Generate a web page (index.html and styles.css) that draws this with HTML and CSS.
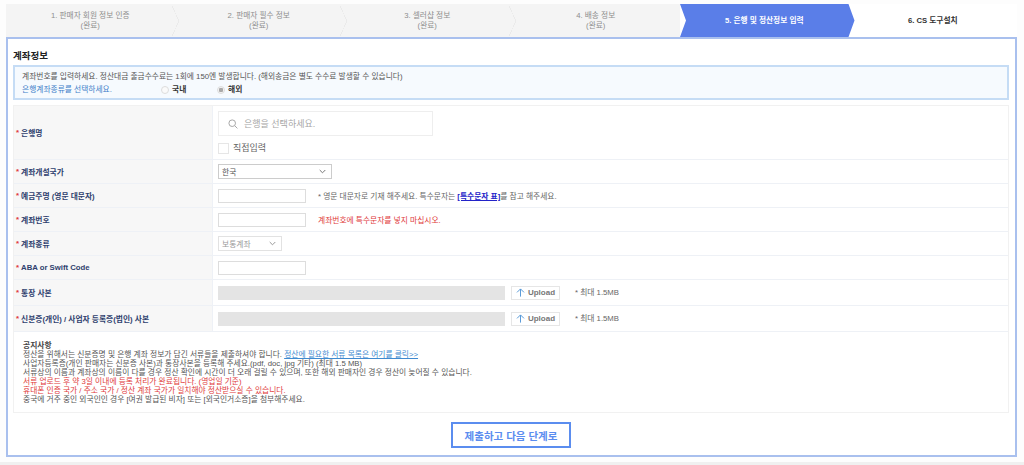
FILE: index.html
```html
<!DOCTYPE html>
<html lang="ko">
<head>
<meta charset="utf-8">
<title>계좌정보</title>
<link rel="stylesheet" href="styles.css">
</head>
<body>
<div class="page">
  <ol class="steps">
    <li class="step done"><span>1. 판매자 회원 정보 인증</span><span>(완료)</span></li>
    <li class="step done"><span>2. 판매자 필수 정보</span><span>(완료)</span></li>
    <li class="step done"><span>3. 셀러샵 정보</span><span>(완료)</span></li>
    <li class="step done last-done"><span>4. 배송 정보</span><span>(완료)</span></li>
    <li class="step active"><span>5. 은행 및 정산정보 입력</span></li>
    <li class="step next"><span>6. CS 도구설치</span></li>
  </ol>
  <main class="panel">
    <h2 class="title">계좌정보</h2>
    <section class="info">
      <p>계좌번호를 입력하세요. 정산대금 출금수수료는 1회에 150엔 발생합니다. (해외송금은 별도 수수료 발생할 수 있습니다)</p>
      <div class="choice">
        <span class="choice-label">은행계좌종류를 선택하세요.</span>
        <span class="radio-wrap first"><i class="radio"></i><b>국내</b></span>
        <span class="radio-wrap"><i class="radio on"></i><b>해외</b></span>
      </div>
    </section>
    <section class="table">
      <div class="row bank">
        <div class="label"><em>*</em><span>은행명</span></div>
        <div class="cell stack">
          <div class="search">
            <svg width="10" height="10" viewBox="0 0 10 10"><circle cx="4.2" cy="4.2" r="3.3" fill="none" stroke="#a8a8a8" stroke-width="1"/><path d="M6.7 6.7 9.4 9.4" stroke="#a8a8a8" stroke-width="1"/></svg>
            <span>은행을 선택하세요.</span>
          </div>
          <div class="check"><i class="box"></i><span>직접입력</span></div>
        </div>
      </div>
      <div class="row r24">
        <div class="label"><em>*</em><span>계좌개설국가</span></div>
        <div class="cell">
          <div class="select wide"><span>한국</span><svg width="7" height="5" viewBox="0 0 7 5"><path d="M.7 1 3.5 3.8 6.3 1" fill="none" stroke="#777" stroke-width="1"/></svg></div>
        </div>
      </div>
      <div class="row r24">
        <div class="label"><em>*</em><span>예금주명 (영문 대문자)</span></div>
        <div class="cell gap12">
          <div class="input"></div>
          <span class="note">* 영문 대문자로 기재 해주세요. 특수문자는 <a class="table-link" href="#">[특수문자 표]</a>를 참고 해주세요.</span>
        </div>
      </div>
      <div class="row r24">
        <div class="label"><em>*</em><span>계좌번호</span></div>
        <div class="cell gap12">
          <div class="input"></div>
          <span class="note red">계좌번호에 특수문자를 넣지 마십시오.</span>
        </div>
      </div>
      <div class="row r24">
        <div class="label"><em>*</em><span>계좌종류</span></div>
        <div class="cell">
          <div class="select narrow"><span>보통계좌</span><svg width="7" height="5" viewBox="0 0 7 5"><path d="M.7 1 3.5 3.8 6.3 1" fill="none" stroke="#999" stroke-width="1"/></svg></div>
        </div>
      </div>
      <div class="row r24">
        <div class="label"><em>*</em><span>ABA or Swift Code</span></div>
        <div class="cell"><div class="input"></div></div>
      </div>
      <div class="row r26">
        <div class="label"><em>*</em><span>통장 사본</span></div>
        <div class="cell">
          <div class="file"></div>
          <div class="upload"><svg width="9" height="9" viewBox="0 0 9 9"><path d="M4.5 8.6V1M1 4.4 4.5 .9 8 4.4" fill="none" stroke="#5b9bd8" stroke-width="1"/></svg><span>Upload</span></div>
          <span class="note max">* 최대 1.5MB</span>
        </div>
      </div>
      <div class="row r26">
        <div class="label"><em>*</em><span>신분증(개인) / 사업자 등록증(법인) 사본</span></div>
        <div class="cell">
          <div class="file"></div>
          <div class="upload"><svg width="9" height="9" viewBox="0 0 9 9"><path d="M4.5 8.6V1M1 4.4 4.5 .9 8 4.4" fill="none" stroke="#5b9bd8" stroke-width="1"/></svg><span>Upload</span></div>
          <span class="note max">* 최대 1.5MB</span>
        </div>
      </div>
      <div class="notice">
        <strong>공지사항</strong>
        <p>정산을 위해서는 신분증명 및 은행 계좌 정보가 담긴 서류들을 제출하셔야 합니다. <a class="doc-link" href="#">정산에 필요한 서류 목록은 여기를 클릭&gt;&gt;</a></p>
        <p>사업자등록증(개인 판매자는 신분증 사본)과 통장사본을 등록해 주세요.(pdf, doc, jpg 기타) (최대 1.5 MB)</p>
        <p>서류상의 이름과 계좌상의 이름이 다를 경우 정산 확인에 시간이 더 오래 걸릴 수 있으며, 또한 해외 판매자인 경우 정산이 늦어질 수 있습니다.</p>
        <p class="red">서류 업로드 후 약 3일 이내에 등록 처리가 완료됩니다. (영업일 기준)</p>
        <p class="red">휴대폰 인증 국가 / 주소 국가 / 정산 계좌 국가가 일치해야 정산받으실 수 있습니다.</p>
        <p>중국에 거주 중인 외국인인 경우 [여권 발급된 비자] 또는 [외국인거소증]을 첨부해주세요.</p>
      </div>
    </section>
    <div class="actions"><button class="submit" type="button">제출하고 다음 단계로</button></div>
  </main>
</div>
<div class="strip"></div>
</body>
</html>
```
FILE: styles.css
```css
* { box-sizing: border-box; }
html, body { margin: 0; height: 465px; overflow: hidden; background: #fdfdfd; }
body { font-family: "Liberation Sans", "Noto Sans CJK KR", sans-serif; font-size: 7.75px; color: #555; display: flex; flex-direction: column; }
p, h2, ol { margin: 0; padding: 0; }
a { text-decoration: underline; }
i, em { font-style: normal; }
.page { height: 462px; padding: 4px 7px 0 6px; }

.steps { list-style: none; display: grid; grid-template-columns: repeat(6, 1fr); height: 33px; background: #fff; }
.step { display: flex; flex-direction: column; align-items: center; justify-content: center; line-height: 10px; font-size: 7.7px; color: #8d8d8d; position: relative; }
.done { background: #f4f4f4; }
.done::after { content: ""; position: absolute; top: 2px; right: -4px; width: 7px; height: 30px; background: linear-gradient(to top right, transparent 47%, #eaeaea 47%, #eaeaea 53%, transparent 53%) top / 100% 50% no-repeat, linear-gradient(to bottom right, transparent 47%, #eaeaea 47%, #eaeaea 53%, transparent 53%) bottom / 100% 50% no-repeat; z-index: 1; }
.last-done::after { display: none; }
.active { background: #5a7ee8; color: #fff; font-weight: 700; margin-right: -6px; clip-path: polygon(0 0, calc(100% - 6px) 0, 100% 50%, calc(100% - 6px) 100%, 0 100%, 6px 50%); z-index: 1; padding-right: 6px; }
.next { color: #333; font-weight: 700; }

.panel { height: 420px; border: 2px solid #a9c0ee; background: #fff; padding: 0 6px 0 5px; display: flex; flex-direction: column; }
.title { font-size: 9.5px; line-height: 13px; color: #222; font-weight: 700; margin-top: 10px; height: 16px; }

.info { height: 35px; border: 2px solid #c5dcf5; background: #f6fafe; padding: 4px 7px 0 7px; line-height: 11px; color: #555; flex: none; }
.choice { display: flex; align-items: center; margin-top: 2px; }
.choice-label { color: #3f7fc9; width: 139px; }
.radio-wrap { display: flex; align-items: center; gap: 3px; width: 56px; color: #333; }
.radio { width: 8px; height: 8px; border-radius: 50%; border: 1px solid #ddd; background: #fafafa; }
.radio.on { background: radial-gradient(circle, #aaa 0 2px, #f4f4f4 2.5px); }

.table { margin-top: 5px; border: 1px solid #f1f1f1; flex: none; }
.row { display: flex; border-bottom: 1px solid #eef1f6; }
.bank { height: 54px; }
.r24 { height: 24px; }
.r26 { height: 26px; }
.label { width: 199px; flex: none; background: #f7f7f7; border-right: 1px solid #eef1f6; display: flex; align-items: center; gap: 2px; padding: 0 0 1px 2px; font-weight: 700; color: #2f3f6e; }
.label em { color: #e03a3a; }
.cell { flex: 1; display: flex; align-items: center; padding-left: 5px; min-width: 0; }
.gap12 { gap: 12px; }
.stack { flex-direction: column; align-items: flex-start; padding-top: 5px; }
.search { width: 215px; height: 25px; border: 1px solid #eee; background: #fff; display: flex; align-items: center; gap: 6px; padding-left: 9px; font-size: 9px; color: #a6a6a6; }
.check { display: flex; align-items: center; gap: 4px; margin-top: 6px; font-size: 9px; color: #666; line-height: 12px; }
.box { width: 11px; height: 11px; border: 1px solid #e6e6e6; background: #fff; }
.select { height: 15px; border: 1px solid #ccc; display: flex; align-items: center; justify-content: space-between; padding: 0 5px 0 3px; color: #555; background: #fff; }
.wide { width: 114px; }
.narrow { width: 64px; color: #999; border-color: #e2e2e2; }
.input { width: 88px; height: 14px; border: 1px solid #ddd; background: #fff; flex: none; }
.note { color: #666; }
.note.red, .red { color: #e03a3a; }
.table-link { color: #2323c8; font-weight: 700; }
.file { width: 287px; height: 14px; background: #e4e4e4; flex: none; }
.upload { margin-left: 6px; width: 49px; height: 14px; border: 1px solid #e6e6e6; background: #fff; display: flex; align-items: center; justify-content: center; gap: 3px; font-size: 8px; font-weight: 700; color: #777; flex: none; }
.max { margin-left: 15px; margin-bottom: 2px; }

.notice { height: 80px; padding: 9px 0 0 9px; line-height: 9px; color: #555; }
.notice strong { display: block; font-weight: 700; color: #444; }
.doc-link { color: #3f8ad0; }

.actions { display: flex; justify-content: center; padding-top: 9px; }
.submit { width: 120px; height: 26px; border: 2px solid #5b8def; background: #fff; color: #5b8def; font: 700 10.5px "Noto Sans CJK KR", sans-serif; padding: 0; }

.strip { height: 3px; background: #f0f0f0; }
```
